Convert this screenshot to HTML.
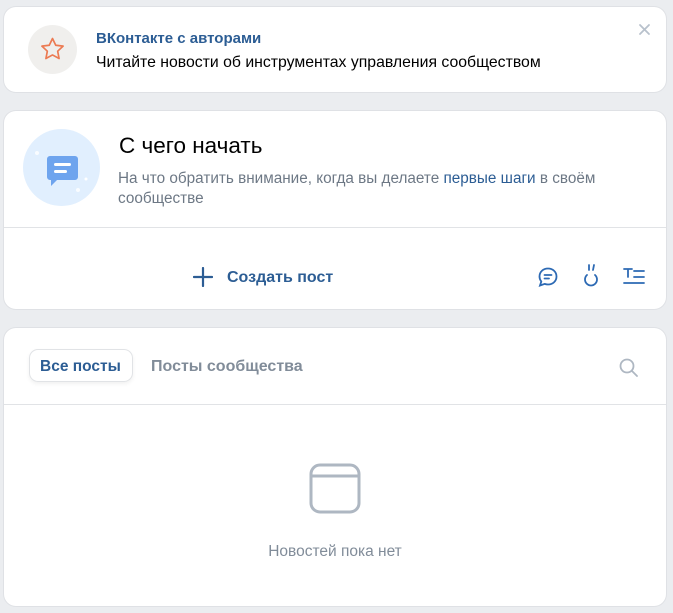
<!DOCTYPE html>
<html><head><meta charset="utf-8"><style>
*{margin:0;padding:0;box-sizing:border-box}
body{width:673px;height:613px;background:#ebedf0;font-family:"Liberation Sans",Arial,sans-serif;position:relative;overflow:hidden;color:#000}
.card{position:absolute;left:4px;width:662px;background:#fff;border-radius:12px;box-shadow:0 0 0 1px #dfe1e5}
.abs{position:absolute;white-space:nowrap}
</style></head><body>
<div class="card" style="top:7px;height:85px">
  <div class="abs" style="left:24px;top:18px;width:49px;height:49px;border-radius:50%;background:#f0efed"></div>
  <svg class="abs" style="left:33px;top:27px" width="31" height="31" viewBox="0 0 24 24"><path d="M12 3.5l2.5 5.2 5.7.7-4.2 3.9 1.1 5.7L12 16.2 6.9 19l1.1-5.7-4.2-3.9 5.7-.7z" fill="none" stroke="#ec7a52" stroke-width="1.3" stroke-linejoin="round"/></svg>
  <div class="abs" style="left:92px;top:23px;font-size:15px;font-weight:bold;color:#2c5d94">ВКонтакте с авторами</div>
  <div class="abs" style="left:92px;top:47px;font-size:15.8px;color:#000">Читайте новости об инструментах управления сообществом</div>
  <svg class="abs" style="left:634px;top:16px" width="13" height="13" viewBox="0 0 13 13"><path d="M2 2l9 9M11 2l-9 9" stroke="#b8c1cc" stroke-width="1.8" stroke-linecap="round"/></svg>
</div>
<div class="card" style="top:111px;height:198px">
  <div class="abs" style="left:19px;top:18px;width:77px;height:77px;border-radius:50%;background:#e1effe"></div>
  <svg class="abs" style="left:19px;top:18px" width="77" height="77" viewBox="0 0 77 77">
    <circle cx="14" cy="24" r="2" fill="#fff" opacity=".8"/><circle cx="63" cy="50" r="1.5" fill="#fff"/><circle cx="55" cy="61" r="2" fill="#fff" opacity=".8"/>
    <path d="M24 30a3 3 0 0 1 3-3h25a3 3 0 0 1 3 3v18a3 3 0 0 1-3 3H34l-6 6v-6h-1a3 3 0 0 1-3-3z" fill="#6ea4ee"/>
    <rect x="31" y="34" width="17" height="3" rx="1.5" fill="#fff"/><rect x="31" y="41" width="13" height="3" rx="1.5" fill="#fff"/>
  </svg>
  <div class="abs" style="left:115px;top:22px;font-size:22.5px;color:#000">С чего начать</div>
  <div class="abs" style="left:114px;top:58px;width:520px;white-space:normal;font-size:15.3px;line-height:20px;color:#6d7885">На что обратить внимание, когда вы делаете <span style="color:#2c5d94">первые шаги</span> в своём сообществе</div>
  <div class="abs" style="left:0;top:116px;width:662px;height:1px;background:#e1e3e6"></div>
  <svg class="abs" style="left:189px;top:156px" width="20" height="20" viewBox="0 0 20 20"><path d="M10 1v18M1 10h18" stroke="#2c5d94" stroke-width="2.2" stroke-linecap="round"/></svg>
  <div class="abs" style="left:223px;top:158px;font-size:16px;font-weight:bold;color:#2c5d94">Создать пост</div>
  <svg class="abs" style="left:533px;top:155px" width="22" height="22" viewBox="0 0 22 22"><path d="M11 2.5c4.8 0 8.5 3.4 8.5 8s-3.7 8-8.5 8c-1.2 0-2.3-.2-3.4-.6L3 19.5l1.3-4C3.3 14.2 2.5 12.5 2.5 10.5c0-4.6 3.7-8 8.5-8z" fill="none" stroke="#2d6ab4" stroke-width="1.8"/><path d="M7.5 9h7M7.5 12.5h4.5" stroke="#2d6ab4" stroke-width="1.8" stroke-linecap="round"/></svg>
  <svg class="abs" style="left:576px;top:152px" width="22" height="26" viewBox="0 0 22 26"><path d="M9 2v5M14 2l-1 5" stroke="#2d6ab4" stroke-width="1.8" stroke-linecap="round"/><path d="M7 12a6 6 0 1 0 8 0" fill="none" stroke="#2d6ab4" stroke-width="1.8" stroke-linecap="round"/></svg>
  <svg class="abs" style="left:619px;top:155px" width="24" height="22" viewBox="0 0 24 22"><path d="M1 3h8M5 3v8M11 5h10M11 11h10M1 17h20" stroke="#2d6ab4" stroke-width="1.8" stroke-linecap="round"/></svg>
</div>
<div class="card" style="top:328px;height:278px">
  <div class="abs" style="left:25px;top:21px;width:104px;height:33px;border-radius:9px;border:1px solid #e1e3e6;box-shadow:0 2px 4px rgba(0,0,0,.06)"></div>
  <div class="abs" style="left:36px;top:30px;font-size:15.5px;font-weight:bold;color:#2c5d94">Все посты</div>
  <div class="abs" style="left:147px;top:30px;font-size:16px;font-weight:bold;color:#818c99">Посты сообщества</div>
  <svg class="abs" style="left:614px;top:29px" width="22" height="22" viewBox="0 0 22 22"><circle cx="9" cy="9" r="6.5" fill="none" stroke="#aeb7c2" stroke-width="1.8"/><path d="M14 14l5 5" stroke="#aeb7c2" stroke-width="1.8" stroke-linecap="round"/></svg>
  <div class="abs" style="left:0;top:76px;width:662px;height:1px;background:#e1e3e6"></div>
  <svg class="abs" style="left:304px;top:134px" width="54" height="54" viewBox="0 0 54 54"><rect x="3" y="3" width="48" height="47" rx="9" fill="none" stroke="#aeb7c2" stroke-width="3"/><path d="M4 14h46" stroke="#aeb7c2" stroke-width="3"/></svg>
  <div class="abs" style="left:0;width:662px;top:215px;text-align:center;font-size:15.5px;color:#818c99">Новостей пока нет</div>
</div>
</body></html>
